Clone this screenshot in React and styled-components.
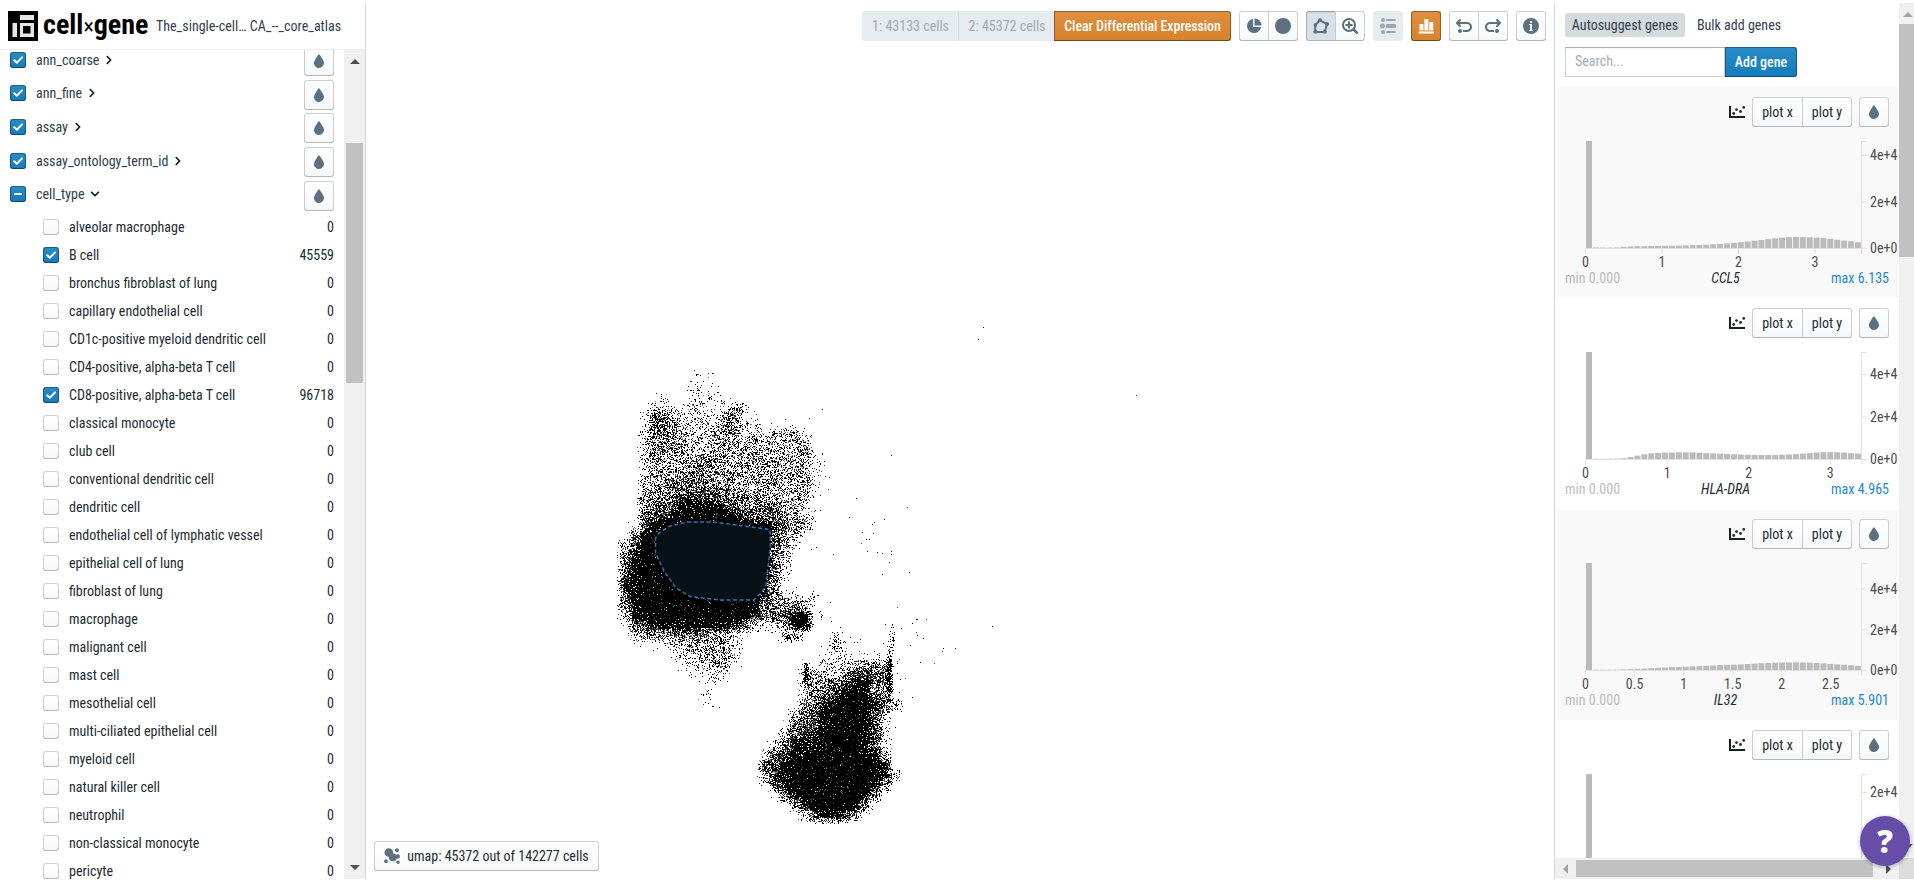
import React, { useMemo } from "react";
import styled, { createGlobalStyle, css } from "styled-components";
import { FaChevronRight, FaChevronDown } from "react-icons/fa";

const Global = createGlobalStyle`
  * { box-sizing: border-box; }
  html, body { margin: 0; padding: 0; background: #fff; overflow: hidden; }
  body {
    font-family: "Roboto Condensed", Roboto, "Liberation Sans", sans-serif;
    font-size: 14px;
    line-height: 18px;
    color: #232b31;
  }
`;

const Page = styled.div`
  width: 1914px;
  height: 883px;
  padding: 3px 0 4px;
  display: grid;
  grid-template-columns: 366px 1188px 360px;
  overflow: hidden;
`;

/* ---------- left sidebar ---------- */

const Sidebar = styled.aside`
  height: 876px;
  border-right: 1px solid #ced9e0;
  display: flex;
  flex-direction: column;
  overflow: hidden;
`;

const Brand = styled.header`
  height: 47px;
  flex: none;
  padding: 8px 0 0 8px;
  display: flex;
  align-items: flex-start;
  border-bottom: 1px solid #eceeef;
`;

const Wordmark = styled.div`
  margin-left: 5px;
  width: 107px;
  font-size: 28px;
  line-height: 28px;
  font-weight: 700;
  color: #000;
  white-space: nowrap;
  span { font-weight: 400; font-size: 22px; }
`;

const DatasetTitle = styled.div`
  margin-left: 6px;
  line-height: 30px;
  white-space: pre;
  color: #30404d;
`;

const SidebarBody = styled.div`
  flex: 1;
  min-height: 0;
  display: grid;
  grid-template-columns: 344px 21px;
`;

const Categories = styled.div`
  overflow: hidden;
  padding-right: 10px;
`;

const CategoryRow = styled.div`
  height: 33.6px;
  padding-left: 10px;
  display: flex;
  align-items: center;
  margin-top: ${(p) => (p.$first ? "-7px" : "0")};
  margin-bottom: ${(p) => (p.$open ? "2px" : "0")};
  color: #30404d;
  svg.chev { margin-left: 5px; }
`;

const CategoryName = styled.span`
  margin-left: 10px;
  white-space: nowrap;
`;

const ColorSlot = styled.div`
  margin-left: auto;
  padding-top: 3px;
`;

const ValueRow = styled.div`
  height: 28px;
  padding: 0 0 0 43px;
  display: flex;
  align-items: center;
`;

const ValueName = styled.span`
  margin-left: 10px;
  padding-top: 1px;
  flex: 1;
  white-space: nowrap;
`;

const Box = styled.span`
  width: 16px;
  height: 16px;
  flex: none;
  border-radius: 3px;
  display: flex;
  align-items: center;
  justify-content: center;
  ${(p) =>
    p.$on
      ? css`
          background: linear-gradient(#2b8bc6, #137cbd);
          box-shadow: inset 0 0 0 1px rgba(16, 22, 26, 0.4), inset 0 -1px 0 rgba(16, 22, 26, 0.2);
        `
      : css`
          background: linear-gradient(#fff, #f5f8fa);
          box-shadow: inset 0 0 0 1px rgba(16, 22, 26, 0.2), inset 0 -1px 0 rgba(16, 22, 26, 0.1);
        `}
`;

const VScroll = styled.div`
  background: #f0f0f0;
  display: flex;
  flex-direction: column;
  align-items: center;
  padding: ${(p) => p.$pad || "0"};
`;

const VThumb = styled.div`
  width: 17px;
  height: ${(p) => p.$h}px;
  margin-top: ${(p) => p.$top}px;
  background: #c1c1c1;
  flex: none;
`;

const Spacer = styled.div`
  flex: 1;
`;

const Arrow = styled.span`
  flex: none;
  width: 0;
  height: 0;
  border: 5px solid transparent;
  ${(p) => p.$dir === "up" && css`border-top: 0; border-bottom-color: ${p.$c};`}
  ${(p) => p.$dir === "down" && css`border-bottom: 0; border-top-color: ${p.$c};`}
  ${(p) => p.$dir === "left" && css`border-left: 0; border-right-color: ${p.$c};`}
  ${(p) => p.$dir === "right" && css`border-right: 0; border-left-color: ${p.$c};`}
`;

/* ---------- buttons ---------- */

const Group = styled.div`
  display: flex;
  > * + * { margin-left: -1px; }
  > *:not(:first-child) { border-top-left-radius: 0; border-bottom-left-radius: 0; }
  > *:not(:last-child) { border-top-right-radius: 0; border-bottom-right-radius: 0; }
`;

const Button = styled.button`
  width: ${(p) => p.$w || 30}px;
  height: 30px;
  padding: 0;
  border: 0;
  border-radius: 3px;
  display: flex;
  align-items: center;
  justify-content: center;
  font: inherit;
  white-space: nowrap;
  color: #232b31;
  background: linear-gradient(#fff, #f5f8fa);
  box-shadow: inset 0 0 0 1px rgba(16, 22, 26, 0.2), inset 0 -1px 0 rgba(16, 22, 26, 0.1);
  svg { color: #5c7080; display: block; }
  ${(p) =>
    p.$active &&
    css`
      background: #d8e1e8;
      box-shadow: inset 0 0 0 1px rgba(16, 22, 26, 0.2), inset 0 1px 2px rgba(16, 22, 26, 0.2);
    `}
  ${(p) =>
    p.$disabled &&
    css`
      background: #e6ebef;
      box-shadow: none;
      color: #a0abb3;
      svg { color: #9aa7b1; }
    `}
  ${(p) =>
    p.$tone &&
    css`
      color: #fff;
      font-weight: 500;
      background: ${p.$tone === "warning" ? "linear-gradient(#e08e3f, #d9822b)" : "linear-gradient(#2b8bc6, #137cbd)"};
      box-shadow: inset 0 0 0 1px rgba(16, 22, 26, 0.4), inset 0 -1px 0 rgba(16, 22, 26, 0.2);
      svg { color: #fff; }
    `}
`;

const Divided = styled(Button)`
  border-left: 1px solid #d5dce1;
`;

const ClearButton = styled(Button)`
  letter-spacing: -0.08px;
`;

/* ---------- centre ---------- */

const Canvas = styled.main`
  height: 876px;
  display: grid;
  grid-template-areas: "stack";
`;

const Plot = styled.svg`
  grid-area: stack;
  display: block;
`;

const Overlay = styled.div`
  grid-area: stack;
  z-index: 1;
  padding: 8px;
  display: flex;
  flex-direction: column;
  justify-content: space-between;
`;

const Toolbar = styled.div`
  display: flex;
  justify-content: flex-end;
  gap: 8px;
`;

const EmbeddingButton = styled(Button)`
  gap: 7px;
`;

/* ---------- right panel ---------- */

const Genes = styled.aside`
  height: 876px;
  border-left: 1px solid #ced9e0;
  display: grid;
  grid-template-columns: 344px 15px;
  grid-template-rows: 855px 21px;
`;

const GeneContent = styled.div`
  overflow: hidden;
`;

const GeneForm = styled.div`
  height: 84px;
  padding: 10px 10px 0;
`;

const Tabs = styled.div`
  display: flex;
  height: 24px;
  margin-bottom: 10px;
`;

const Tab = styled.span`
  width: ${(p) => (p.$on ? 120 : 96)}px;
  margin-right: 6px;
  border-radius: 3px;
  text-align: center;
  line-height: 24px;
  color: #30404d;
  background: ${(p) => (p.$on ? "#d5dadd" : "transparent")};
`;

const SearchRow = styled.div`
  display: flex;
`;

const SearchBox = styled.div`
  width: 160px;
  height: 30px;
  padding-left: 10px;
  line-height: 29px;
  color: #a3adb5;
  background: #fff;
  box-shadow: inset 0 0 0 1px rgba(16, 22, 26, 0.2), inset 0 1px 1px rgba(16, 22, 26, 0.2);
`;

const AddButton = styled(Button)`
  border-radius: 0 3px 3px 0;
`;

const Card = styled.section`
  height: 211px;
  padding-top: 10px;
  background: ${(p) => (p.$shade ? "#f9f9f9" : "#fff")};
`;

const CardTools = styled.div`
  height: 30px;
  padding-right: 10px;
  display: flex;
  align-items: center;
  justify-content: flex-end;
  > svg { margin-right: 7px; }
  > button { margin-left: 7px; }
`;

const Chart = styled.svg`
  display: block;
  text { font-size: 14px; fill: #4d4d4d; }
`;

const CardFoot = styled.div`
  padding: 0 10px;
  display: grid;
  grid-template-columns: 1fr auto 1fr;
  height: 18px;
`;

const Min = styled.span`
  color: #bbb;
`;
const GeneName = styled.span`
  font-style: italic;
  padding-right: 3px;
`;
const Max = styled.span`
  text-align: right;
  color: #2488ca;
`;

const HScroll = styled.div`
  background: #f0f0f0;
  display: flex;
  align-items: center;
  padding: 0 0 0 8px;
`;

const HThumb = styled.div`
  width: 297px;
  height: 17px;
  margin: 0 13px 0 8px;
  background: #c1c1c1;
`;

const Corner = styled.div`
  background: #dcdcdc;
`;

const Help = styled.button`
  position: absolute;
  left: 1860px;
  top: 816px;
  width: 50px;
  height: 50px;
  padding: 0;
  border: 0;
  border-radius: 50%;
  background: #664ea8;
  color: #fff;
  font: 800 31px/50px "Open Sans", sans-serif;
  box-shadow: 0 1px 4px rgba(0, 0, 0, 0.3);
`;

/* ---------- icons (16px grid) ---------- */

const Icon = ({ children }) => (
  <svg width="16" height="16" viewBox="0 0 16 16" fill="currentColor">
    {children}
  </svg>
);

const Tint = () => (
  <Icon>
    <path d="M7.88 1s-4.9 6.28-4.9 8.9c.01 2.82 2.34 5.1 4.99 5.1 2.65-.01 5.03-2.3 5.03-5.13C12.99 7.17 7.88 1 7.88 1z" />
  </Icon>
);
const Pie = () => (
  <Icon>
    <path d="M7 1.05A7 7 0 1 0 14.95 9H7z" />
    <path d="M8.5 .5v7h7A7 7 0 0 0 8.500 .5z" />
  </Icon>
);
const Disc = () => (
  <Icon>
    <circle cx="8" cy="8" r="8" />
  </Icon>
);
const Lasso = () => (
  <Icon>
    <path d="M7 2.300L14 6l-2.200 7.900H2.300V7z" fill="none" stroke="currentColor" strokeWidth="2" />
    <circle cx="7" cy="2.300" r="2" />
    <circle cx="14" cy="6" r="2" />
    <circle cx="11.800" cy="13.800" r="2" />
    <circle cx="2.300" cy="13.800" r="2" />
    <circle cx="2.300" cy="7" r="1.800" />
  </Icon>
);
const ZoomIn = () => (
  <Icon>
    <g fill="none" stroke="currentColor" strokeWidth="2" strokeLinecap="round">
      <circle cx="7" cy="7" r="6" />
      <path d="M4.200 7h5.600M7 4.200v5.600" />
      <path d="M11.800 11.800L14.700 14.700" strokeWidth="2.600" />
    </g>
  </Icon>
);
const Legend = () => (
  <Icon>
    <circle cx="3" cy="2" r="2" />
    <circle cx="2.500" cy="8" r="2.500" />
    <circle cx="3" cy="14" r="2" />
    <rect x="6" y="1" width="10" height="2" rx="1" />
    <rect x="6" y="6" width="10" height="4" rx="1" />
    <rect x="6" y="13" width="10" height="2" rx="1" />
  </Icon>
);
const Bars = () => (
  <Icon>
    <rect x="1.500" y="6" width="4" height="6.500" rx=".6" />
    <rect x="6.400" y="1" width="4" height="11.500" rx=".6" />
    <rect x="11.300" y="4" width="4" height="8.500" rx=".6" />
    <rect x=".5" y="13.500" width="15.500" height="2" rx=".8" />
  </Icon>
);
const undoPath =
  "M4 11c-1.100 0-2 .9-2 2s.9 2 2 2 2-.9 2-2-.9-2-2-2zm7-7H3.410L4.700 2.710c.19-.18.3-.43.3-.71A1.003 1.003 0 0 0 3.290 1.290l-3 3C.11 4.470 0 4.720 0 5c0 .28.11.53.29.71l3 3a1.003 1.003 0 0 0 1.420-1.420L3.410 6H11c1.660 0 3 1.340 3 3s-1.340 3-3 3H7v2h4c2.760 0 5-2.240 5-5s-2.240-5-5-5z";
const Undo = () => (
  <Icon>
    <path d={undoPath} />
  </Icon>
);
const Redo = () => (
  <Icon>
    <path d={undoPath} transform="translate(16 0) scale(-1 1)" />
  </Icon>
);
const Info = () => (
  <Icon>
    <path
      fillRule="evenodd"
      d="M8 0a8 8 0 1 0 0 16A8 8 0 0 0 8 0zM7 3h2v2H7zM6 6h3v6h1v1H6v-1h1V7H6z"
    />
  </Icon>
);
const Cluster = () => (
  <Icon>
    <circle cx="4.800" cy="4.500" r="4.300" />
    <circle cx="8.800" cy="9.300" r="3.900" />
    <circle cx="13.700" cy="8.500" r="2.200" />
    <circle cx="13" cy="2.200" r="2" />
    <circle cx="2" cy="13.200" r="1.900" />
    <circle cx="14" cy="14.200" r="1.700" />
  </Icon>
);
const ScatterIcon = () => (
  <Icon>
    <path d="M0 2h2v10h14v2H0z" fill="#182026" />
    <circle cx="4.700" cy="9.500" r="1.400" />
    <circle cx="7.500" cy="5.600" r="1.400" />
    <circle cx="11.500" cy="7.500" r="1.400" />
    <circle cx="14.700" cy="3.400" r="1.400" />
  </Icon>
);
const Tick = () => (
  <svg width="16" height="16" viewBox="0 0 16 16" fill="none" stroke="#fff" strokeWidth="2" strokeLinecap="round" strokeLinejoin="round">
    <path d="M4.200 8.200L6.800 10.800L12 5.400" />
  </svg>
);
const Dash = () => (
  <svg width="16" height="16" viewBox="0 0 16 16" fill="#fff">
    <rect x="4" y="7" width="8" height="2" rx=".8" />
  </svg>
);
const Logo = () => (
  <svg width="30" height="30" viewBox="0 0 30 30">
    <rect width="30" height="30" fill="#000" />
    <g fill="#e6e6e6">
      <rect x="12" y="4" width="14" height="5" />
      <rect x="4.500" y="12" width="4.500" height="14" />
      <path fillRule="evenodd" d="M12 12h14v14H12zM15 15v7.500h7.500V15z" />
    </g>
  </svg>
);

/* ---------- embedding point cloud ---------- */

// Density rows: [first column, levels 0-9], one row and one column per 10px.
const density = [
  [0, ""], [0, ""],
  [9, "101"],
  [8, "1211"],
  [5, "1111222"],
  [5, "2212322212"],
  [4, "254323324421"],
  [4, "2554333354321111"],
  [4, "35544334443334442"],
  [4, "35554333444444444"],
  [4, "355443444444444442"],
  [4, "344445554444444442"],
  [4, "344555555444444442"],
  [4, "445666655444444442"],
  [4, "455677776544444441"],
  [4, "5667888876555544310"],
  [4, "67789998887666543"],
  [3, "278999999999998654"],
  [3, "68999999999999654"],
  [2, "379999999999999642"],
  [2, "68999999999999953"],
  [2, "68999999999999963"],
  [2, "78999999999999952"],
  [2, "8899999999999984"],
  [2, "78999999999999753221"],
  [2, "68999999999998655541"],
  [2, "388999999999976668801"],
  [2, "1678888888886323477"],
  [3, "34545665543100133"],
  [3, "11223444443100000001211001"],
  [7, "233444300000000222022021"],
  [8, "2334310000002133345551"],
  [8, "1223200000003443577661"],
  [9, "1210000000045567886500"],
  [10, "21000000003567898651"],
  [10, "110000000156889998640"],
  [19, "4678999873"],
  [18, "16778999872"],
  [18, "47789999873"],
  [17, "368889999872"],
  [16, "3778899999884"],
  [16, "6789999999988"],
  [16, "47899999999883"],
  [16, "16899999999840"],
  [17, "26899999985"],
  [19, "58999986"],
  [20, "378874"],
  [0, ""],
];
const levels = [0, 0.015, 0.08, 0.22, 0.39, 0.52, 0.66, 0.81, 0.93, 0.994];

const strays = [
  [983, 327], [978, 339], [1136, 395], [992, 626], [822, 409], [809, 418], [891, 455], [856, 498],
  [907, 507], [884, 519], [849, 517], [874, 522], [872, 524], [862, 532], [873, 533], [866, 539],
  [869, 539], [861, 543], [867, 551], [877, 552], [882, 553], [891, 551], [891, 554], [889, 562],
  [882, 574], [909, 572], [833, 554], [816, 547], [811, 549], [814, 511], [815, 521], [830, 602],
  [897, 607], [901, 628], [916, 619], [916, 632], [917, 635], [910, 645], [905, 678], [912, 697],
  [824, 461], [824, 465], [825, 476], [829, 477], [828, 489], [912, 623], [917, 619], [926, 619],
  [923, 638], [943, 648], [942, 651], [955, 648], [920, 662], [934, 663], [895, 727], [885, 624],
  [892, 625], [820, 611], [821, 616], [821, 619], [819, 612], [822, 615], [821, 614],
  [697, 374], [700, 375], [713, 373], [718, 386], [712, 383],
];

// Short, tight streaks: [x, y, spread x, spread y, point count]
const knots = [
  [806, 673, 2, 7, 120], [889, 675, 2, 17, 260], [801, 622, 6, 5, 260], [729, 421, 3, 8, 60],
  [738, 408, 5, 4, 40], [793, 637, 7, 3, 45], [812, 597, 3, 5, 16], [659, 422, 8, 13, 150],
  [892, 640, 2, 8, 30], [836, 644, 5, 10, 60],
];

function buildPoints() {
  let seed = 20231;
  const rnd = () => {
    seed = (seed + 0x6d2b79f5) | 0;
    let t = Math.imul(seed ^ (seed >>> 15), 1 | seed);
    t = (t + Math.imul(t ^ (t >>> 7), 61 | t)) ^ t;
    return ((t ^ (t >>> 14)) >>> 0) / 4294967296;
  };
  const at = (r, c) => {
    const row = density[r];
    if (!row) return 0;
    const ch = row[1][c - row[0]];
    return ch ? levels[+ch] : 0;
  };
  const steep = (f) => Math.min(1, Math.max(0, (f - 0.5) * 1.350 + 0.5));
  const shades = ["", "", ""];
  const put = (x, y, s) => {
    shades[s] += `M${x} ${y}.5h1`;
  };
  for (let y = 350; y < 830; y++) {
    for (let x = 612; x < 935; x++) {
      const gy = (y - 350) / 10 - 0.5;
      const gx = (x - 600) / 10 - 0.5;
      const r = Math.floor(gy);
      const c = Math.floor(gx);
      const fy = steep(gy - r);
      const fx = steep(gx - c);
      const p =
        (at(r, c) * (1 - fx) + at(r, c + 1) * fx) * (1 - fy) +
        (at(r + 1, c) * (1 - fx) + at(r + 1, c + 1) * fx) * fy;
      if (p > 0 && rnd() < p) {
        const k = rnd();
        const soft = p > 0.85 ? 0.03 : 0.2;
        put(x, y, k < soft ? 1 : k < soft * 1.600 ? 2 : 0);
      }
    }
  }
  const gauss = () => rnd() + rnd() + rnd() - 1.500;
  knots.forEach(([x, y, sx, sy, n]) => {
    for (let i = 0; i < n; i++) put(Math.round(x + gauss() * sx * 1.500), Math.round(y + gauss() * sy * 1.500), 0);
  });
  strays.forEach(([x, y], i) => put(x, y, i % 3 === 2 ? 1 : 0));
  return shades;
}

function Embedding() {
  const [dark, mid, light] = useMemo(buildPoints, []);
  return (
    <Plot width="1188" height="876" viewBox="366 3 1188 876">
      <g fill="none" strokeWidth="1" shapeRendering="crispEdges">
        <path d={light} stroke="#808080" />
        <path d={mid} stroke="#454545" />
        <path d={dark} stroke="#000" />
      </g>
      <path
        d="M687 522L714 522L770 529.500L770.500 545L768 568L766 585L762 592L754 600L720 600L690 596.500L676 588L664 571L655.500 553L655.500 538L659 533L670 526Z"
        fill="#061117"
        stroke="#2a7ab0"
        strokeWidth="1.400"
        strokeDasharray="4 2.500"
      />
    </Plot>
  );
}

/* ---------- data ---------- */

const categories = ["ann_coarse", "ann_fine", "assay", "assay_ontology_term_id", "cell_type"];
const cellTypes = [
  "alveolar macrophage", "B cell", "bronchus fibroblast of lung", "capillary endothelial cell",
  "CD1c-positive myeloid dendritic cell", "CD4-positive, alpha-beta T cell", "CD8-positive, alpha-beta T cell",
  "classical monocyte", "club cell", "conventional dendritic cell", "dendritic cell",
  "endothelial cell of lymphatic vessel", "epithelial cell of lung", "fibroblast of lung", "macrophage",
  "malignant cell", "mast cell", "mesothelial cell", "multi-ciliated epithelial cell", "myeloid cell",
  "natural killer cell", "neutrophil", "non-classical monocyte", "pericyte",
];
const counts = { "B cell": 45559, "CD8-positive, alpha-beta T cell": 96718 };

const genes = [
  {
    name: "CCL5", max: "6.135", xStep: 76.500, xLabels: ["0", "1", "2", "3"],
    y: [["0e+0", 107.500], ["2e+4", 61], ["4e+4", 14.500]],
    bars: [0.5, 0.4, 0.4, 0.5, 1.200, 1.500, 1.700, 1.800, 2, 2, 2.200, 2.300, 2.400, 2.600, 2.800, 3, 3.300, 3.700, 4.100, 4.600, 5.200, 5.800, 6.500, 7.300, 8, 8.900, 9.700, 10.400, 10.800, 11, 10.900, 10.700, 10.400, 9.900, 9.200, 8.300, 7.500, 6.700, 5.700],
  },
  {
    name: "HLA-DRA", max: "4.965", xStep: 81.600, xLabels: ["0", "1", "2", "3"],
    y: [["0e+0", 107.500], ["2e+4", 65], ["4e+4", 22.500]],
    bars: [0.3, 0.3, 0.3, 0.4, 0.8, 2, 3.300, 4.700, 5.700, 6.100, 6.400, 6.500, 6.700, 6.700, 6.600, 6.200, 5.900, 5.600, 5.300, 5, 4.700, 4.400, 4.200, 4.100, 4, 4, 4.100, 4.300, 4.500, 4.900, 5.400, 5.900, 6.500, 6.800, 6.800, 6.700, 6.400, 5.800, 5.400],
  },
  {
    name: "IL32", max: "5.901", xStep: 49.050, xLabels: ["0", "0.5", "1", "1.5", "2", "2.5"],
    y: [["0e+0", 107.500], ["2e+4", 67], ["4e+4", 26]],
    bars: [0.3, 0.3, 0.3, 0.4, 0.6, 0.9, 1.200, 1.500, 1.900, 2.200, 2.500, 2.800, 3, 3.300, 3.600, 3.900, 4.300, 4.600, 4.900, 5.100, 5.300, 5.600, 6, 6.400, 6.800, 7, 7.200, 7.400, 7.600, 7.700, 7.500, 7.300, 7, 6.600, 6.100, 5.600, 5.200, 4.700, 4.200],
  },
  { name: "", max: "", xStep: 0, xLabels: [], y: [["2e+4", 18.500]], bars: [] },
];

function Histogram({ gene }) {
  const x0 = 31;
  const step = 6.890;
  return (
    <Chart width="344" height="142" viewBox="0 0 344 142">
      <rect x={x0} y="14" width="6" height="107" fill="#bbb" shapeRendering="crispEdges" />
      {gene.bars.map((h, i) => (
        <rect key={i} x={x0 + 0.200 + (i + 1) * step} y={121 - h} width={step - 0.900} height={h} fill="#bbb" />
      ))}
      <g stroke="#e2e2e2" fill="none" transform="translate(0 .5)">
        <path d="M30.500 126v-5h276v5" />
        <path d="M312 14h-5.500v107h5.500" />
        {gene.xLabels.map((l, i) => (
          <path key={l} d={`M${30.500 + i * gene.xStep} 121v5`} />
        ))}
        {gene.y.map(([l, y]) => (
          <path key={l} d={`M306.500 ${y + 13.500}h5.500`} />
        ))}
      </g>
      {gene.xLabels.map((l, i) => (
        <text key={l} x={30.500 + i * gene.xStep} y="139.500" textAnchor="middle">{l}</text>
      ))}
      {gene.y.map(([l, y]) => (
        <text key={l} x="315" y={y + 18.500}>{l}</text>
      ))}
    </Chart>
  );
}

function GeneCard({ gene, shade }) {
  return (
    <Card $shade={shade}>
      <CardTools>
        <ScatterIcon />
        <Group>
          <Button $w={51}>plot x</Button>
          <Button $w={50}>plot y</Button>
        </Group>
        <Button><Tint /></Button>
      </CardTools>
      <Histogram gene={gene} />
      {gene.name && (
        <CardFoot>
          <Min>min 0.000</Min>
          <GeneName>{gene.name}</GeneName>
          <Max>max {gene.max}</Max>
        </CardFoot>
      )}
    </Card>
  );
}

export default function App() {
  return (
    <>
      <Global />
      <Page>
        <Sidebar>
          <Brand>
            <Logo />
            <Wordmark>cell<span>×</span>gene</Wordmark>
            <DatasetTitle>The_single-cell… CA_--_core_atlas</DatasetTitle>
          </Brand>
          <SidebarBody>
            <Categories>
              {categories.map((name, i) => {
                const open = name === "cell_type";
                const Chev = open ? FaChevronDown : FaChevronRight;
                return (
                  <CategoryRow key={name} $first={i === 0} $open={open}>
                    <Box $on>{open ? <Dash /> : <Tick />}</Box>
                    <CategoryName>{name}</CategoryName>
                    <Chev className="chev" size={10} color="#182026" />
                    <ColorSlot><Button><Tint /></Button></ColorSlot>
                  </CategoryRow>
                );
              })}
              {cellTypes.map((name) => (
                <ValueRow key={name}>
                  <Box $on={!!counts[name]}>{counts[name] && <Tick />}</Box>
                  <ValueName>{name}</ValueName>
                  <span>{counts[name] || 0}</span>
                </ValueRow>
              ))}
            </Categories>
            <VScroll $pad="9px 0">
              <Arrow $dir="up" $c="#505050" />
              <VThumb $h={240} $top={79} />
              <Spacer />
              <Arrow $dir="down" $c="#505050" />
            </VScroll>
          </SidebarBody>
        </Sidebar>

        <Canvas>
          <Embedding />
          <Overlay>
            <Toolbar>
              <Group>
                <Button $w={97} $disabled>1: 43133 cells</Button>
                <Divided $w={97} $disabled>2: 45372 cells</Divided>
                <ClearButton $w={177} $tone="warning">Clear Differential Expression</ClearButton>
              </Group>
              <Group>
                <Button><Pie /></Button>
                <Button><Disc /></Button>
              </Group>
              <Group>
                <Button $active><Lasso /></Button>
                <Button><ZoomIn /></Button>
              </Group>
              <Button $disabled><Legend /></Button>
              <Button $tone="warning"><Bars /></Button>
              <Group>
                <Button><Undo /></Button>
                <Button><Redo /></Button>
              </Group>
              <Button><Info /></Button>
            </Toolbar>
            <EmbeddingButton $w={225}>
              <Cluster />
              umap: 45372 out of 142277 cells
            </EmbeddingButton>
          </Overlay>
        </Canvas>

        <Genes>
          <GeneContent>
            <GeneForm>
              <Tabs>
                <Tab $on>Autosuggest genes</Tab>
                <Tab>Bulk add genes</Tab>
              </Tabs>
              <SearchRow>
                <SearchBox>Search...</SearchBox>
                <AddButton $w={72} $tone="primary">Add gene</AddButton>
              </SearchRow>
            </GeneForm>
            {genes.map((g, i) => (
              <GeneCard key={i} gene={g} shade={i % 2 === 0} />
            ))}
          </GeneContent>
          <VScroll $pad="9px 0 9px 2px">
            <Arrow $dir="up" $c="#a3a3a3" />
            <VThumb $h={233} $top={7} />
            <Spacer />
            <Arrow $dir="down" $c="#505050" />
          </VScroll>
          <HScroll>
            <Arrow $dir="left" $c="#a3a3a3" />
            <HThumb />
            <Arrow $dir="right" $c="#505050" />
          </HScroll>
          <Corner />
        </Genes>
      </Page>
      <Help>?</Help>
    </>
  );
}
